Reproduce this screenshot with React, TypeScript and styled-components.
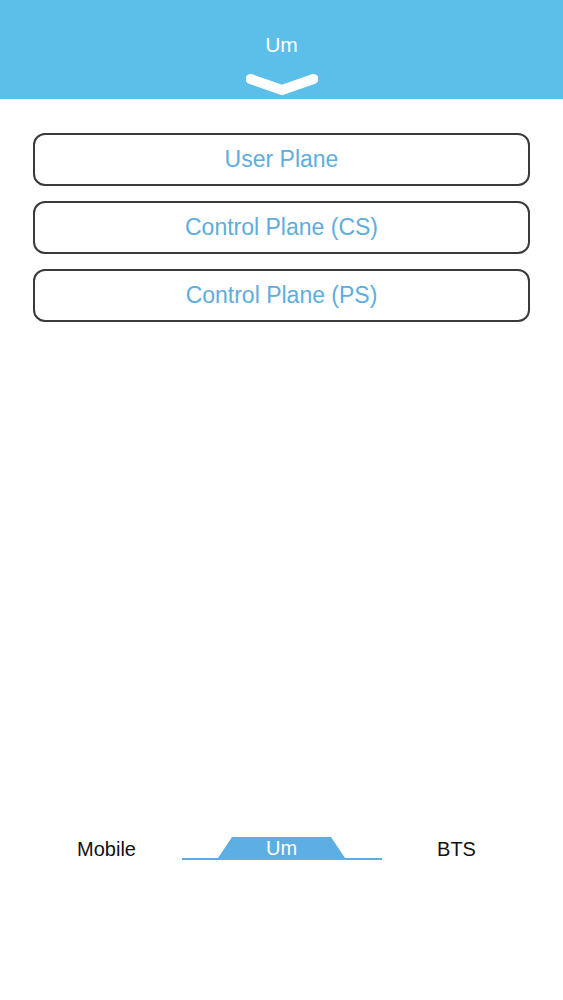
import React from "react";
import styled, { createGlobalStyle } from "styled-components";

const GlobalStyle = createGlobalStyle`
  html, body {
    margin: 0;
    padding: 0;
    background: #ffffff;
    font-family: "Liberation Sans", Arial, Helvetica, sans-serif;
  }
  * { box-sizing: border-box; }
`;

const Page = styled.div`
  display: flex;
  flex-direction: column;
  height: 1000px;
  background: #ffffff;
`;

const Header = styled.header`
  height: 99px;
  background: #5bbfea;
  display: flex;
  flex-direction: column;
  align-items: center;
  padding-top: 32px;
`;

const HeaderTitle = styled.div`
  color: #ffffff;
  font-size: 21px;
  line-height: 26px;
  height: 26px;
`;

const Chevron = styled.svg`
  display: block;
  margin-top: 15px;
  margin-left: 1px;
`;

const Content = styled.main`
  flex: 1;
  display: flex;
  flex-direction: column;
  gap: 15px;
  padding: 34px 33px 0;
`;

const PlaneButton = styled.button`
  height: 53px;
  width: 100%;
  border: 2px solid #3a3a3a;
  border-radius: 12px;
  background: #ffffff;
  color: #5eaddd;
  font-family: "Liberation Sans", Arial, Helvetica, sans-serif;
  font-size: 23px;
  display: flex;
  align-items: center;
  justify-content: center;
  padding: 0;
  cursor: pointer;
`;

const TabBar = styled.nav`
  display: flex;
  justify-content: center;
  align-items: flex-end;
  height: 23px;
  margin-bottom: 140px;
`;

const SideTab = styled.div`
  width: 150px;
  text-align: center;
  color: #111111;
  font-size: 20px;
  line-height: 25px;
  height: 23px;
`;

const TabTrack = styled.div`
  width: 200px;
  height: 23px;
  border-bottom: 2px solid #5daee2;
  display: flex;
  justify-content: center;
  align-items: flex-end;
`;

const ActiveTab = styled.div`
  width: 127px;
  height: 21px;
  background: #5daee2;
  clip-path: polygon(14px 0, 113px 0, 100% 100%, 0 100%);
  color: #ffffff;
  font-size: 20px;
  line-height: 23px;
  text-align: center;
`;

const planes = ["User Plane", "Control Plane (CS)", "Control Plane (PS)"];

export default function App() {
  return (
    <>
      <GlobalStyle />
      <Page>
        <Header>
          <HeaderTitle>Um</HeaderTitle>
          <Chevron width="72" height="24" viewBox="0 0 72 24">
            <polyline
              points="4.5,6 36,17 67.5,6"
              fill="none"
              stroke="#ffffff"
              strokeWidth="10"
              strokeLinecap="round"
              strokeLinejoin="round"
            />
          </Chevron>
        </Header>
        <Content>
          {planes.map((p) => (
            <PlaneButton key={p}>{p}</PlaneButton>
          ))}
        </Content>
        <TabBar>
          <SideTab>Mobile</SideTab>
          <TabTrack>
            <ActiveTab>Um</ActiveTab>
          </TabTrack>
          <SideTab>BTS</SideTab>
        </TabBar>
      </Page>
    </>
  );
}
